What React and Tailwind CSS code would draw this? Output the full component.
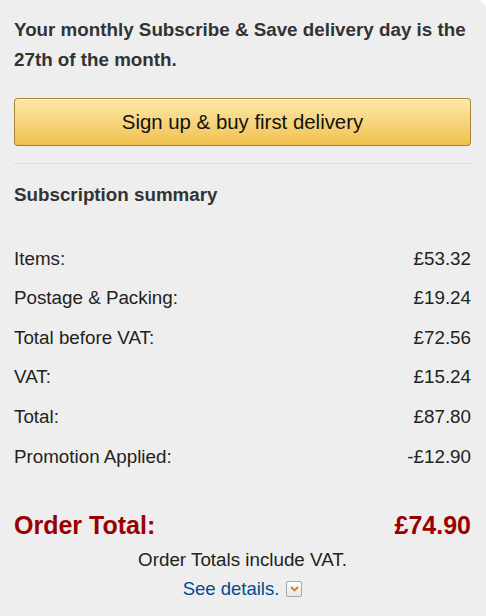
import React from "react";

const rows = [
  { label: "Items:", value: "£53.32" },
  { label: "Postage & Packing:", value: "£19.24" },
  { label: "Total before VAT:", value: "£72.56" },
  { label: "VAT:", value: "£15.24" },
  { label: "Total:", value: "£87.80" },
  { label: "Promotion Applied:", value: "-£12.90" },
];

const App = () => {
  return (
    <div className="min-h-[616px] w-full bg-white font-['Liberation_Sans',Arial,sans-serif]">
      <div className="min-h-[616px] bg-[#eeeeee] rounded-tr-[9px] pl-[14px] pr-[15px] pt-[15px]">
        {/* Delivery day */}
        <h1 className="text-[18.8px] leading-[30px] font-bold text-[#333333]">
          Your monthly Subscribe &amp; Save delivery day is the 27th of the
          month.
        </h1>

        <button className="mt-[23px] w-full h-[48px] rounded-[4px] border border-[#a88734] border-b-[#9c7e31] bg-gradient-to-b from-[#fde8a8] to-[#f0c14b] text-[20.4px] text-[#111111] shadow-[inset_0_1px_0_rgba(255,255,255,0.6)]">
          Sign up &amp; buy first delivery
        </button>

        <div className="mt-[17px] h-px bg-[#dddddd]" />

        {/* Summary */}
        <h2 className="mt-[16px] text-[18.8px] leading-[30px] font-bold text-[#333333]">
          Subscription summary
        </h2>

        <div className="mt-[29px]">
          {rows.map((row) => (
            <div
              key={row.label}
              className="h-[39.6px] flex items-center justify-between text-[18.8px] text-[#222222]"
            >
              <span>{row.label}</span>
              <span>{row.value}</span>
            </div>
          ))}
        </div>

        <div className="mt-[33px] flex justify-between items-center text-[25px] leading-[30px] font-bold text-[#990000]">
          <span>Order Total:</span>
          <span>£74.90</span>
        </div>

        <p className="mt-[7px] text-center text-[18.8px] leading-[26px] text-[#222222]">
          Order Totals include VAT.
        </p>
        <p className="mt-[3px] text-center text-[18.5px] leading-[26px]">
          <a href="#" className="text-[#004b91]">
            See details.
          </a>
          <span className="ml-[7px] inline-flex items-center justify-center align-[3px] w-[16px] h-[16px] rounded-[2px] border border-[#a6a6a6] bg-gradient-to-b from-white to-[#e6e6e6]">
            <svg width="9" height="6" viewBox="0 0 9 6">
              <path
                d="M1 1 L4.5 4.5 L8 1"
                fill="none"
                stroke="#e47911"
                strokeWidth="1.8"
              />
            </svg>
          </span>
        </p>
      </div>
    </div>
  );
};

export default App;
